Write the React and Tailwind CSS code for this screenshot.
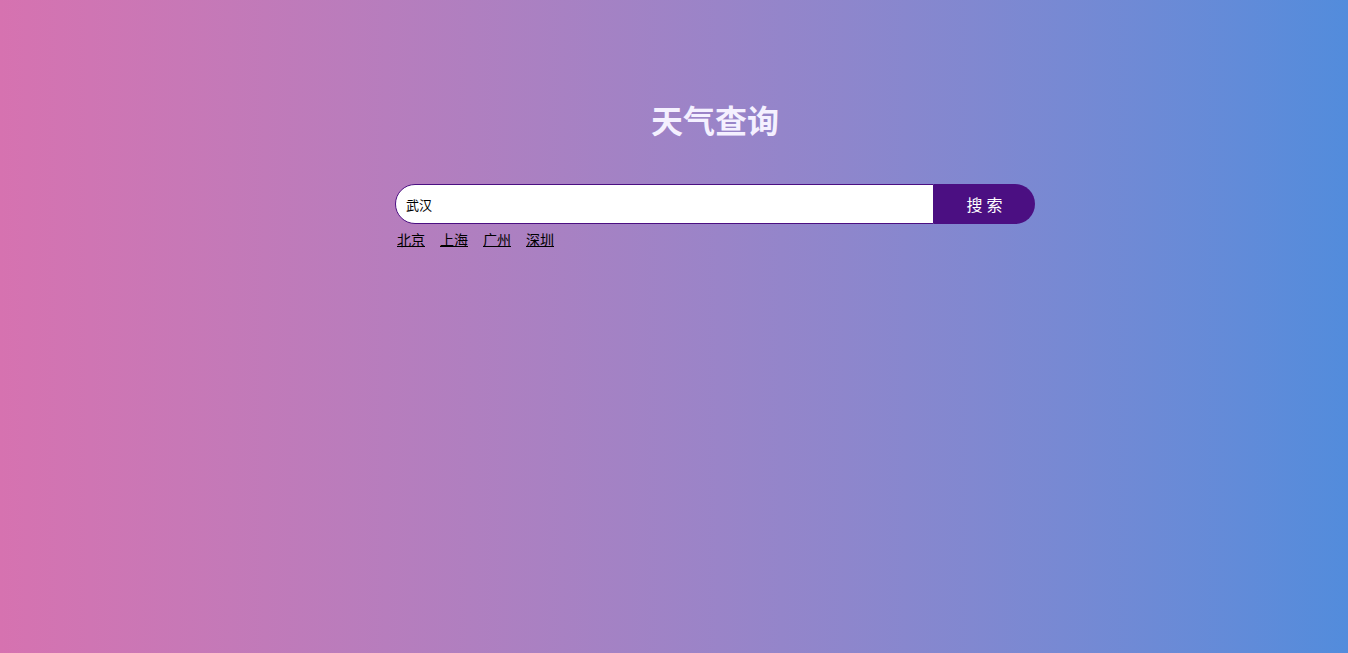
import React, { useState } from 'react';

export default function App() {
  const [city, setCity] = useState('武汉');
  const hotCities = ['北京', '上海', '广州', '深圳'];

  return (
    <div
      className="min-h-screen w-full bg-gradient-to-r from-[#d672b0] to-[#528cdc] pt-[96px] pl-[82px]"
      style={{ fontFamily: '"Noto Sans CJK SC", "Liberation Sans", sans-serif' }}
    >
      <div className="mx-auto w-[640px]">
        {/* Title */}
        <h1 className="text-center text-[32px] font-bold leading-[46px] text-[#f4f0ff]">天气查询</h1>

        {/* Search */}
        <div className="mt-[42px] flex h-[40px]">
          <input
            value={city}
            onChange={(e) => setCity(e.target.value)}
            className="h-full flex-1 rounded-l-[20px] border border-[#4b0f82] bg-white pl-[10px] text-[13px] text-black outline-none"
          />
          <button className="h-full w-[101px] rounded-r-[20px] bg-[#4b0f82] pl-[4px] text-[16px] tracking-[4px] text-white">
            搜索
          </button>
        </div>

        {/* Hot cities */}
        <div className="mt-[5px] flex gap-[15px] pl-[2px] text-[14px] leading-[20px]">
          {hotCities.map((c) => (
            <a key={c} href="#" className="text-black underline">
              {c}
            </a>
          ))}
        </div>
      </div>
    </div>
  );
}
